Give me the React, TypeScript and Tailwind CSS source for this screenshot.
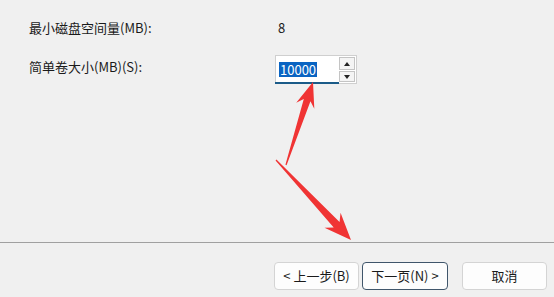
function Arrow({
  tail,
  tip,
  head = 22,
  halfHead = 9,
  shaft = 3,
}: {
  tail: [number, number];
  tip: [number, number];
  head?: number;
  halfHead?: number;
  shaft?: number;
}) {
  const dx = tip[0] - tail[0];
  const dy = tip[1] - tail[1];
  const len = Math.hypot(dx, dy);
  const ux = dx / len;
  const uy = dy / len;
  const px = -uy;
  const py = ux;
  const bx = tip[0] - ux * head;
  const by = tip[1] - uy * head;
  const notchX = tip[0] - ux * (head - 6);
  const notchY = tip[1] - uy * (head - 6);
  const pts = [
    [tail[0] + px * 0.6, tail[1] + py * 0.6],
    [notchX + px * shaft, notchY + py * shaft],
    [bx + px * halfHead, by + py * halfHead],
    [tip[0], tip[1]],
    [bx - px * halfHead, by - py * halfHead],
    [notchX - px * shaft, notchY - py * shaft],
    [tail[0] - px * 0.6, tail[1] - py * 0.6],
  ]
    .map((p) => p.join(","))
    .join(" ");
  return <polygon points={pts} fill="#f03434" />;
}

function Button({
  children,
  primary,
  width,
}: {
  children: React.ReactNode;
  primary?: boolean;
  width: string;
}) {
  return (
    <button
      className={`h-[28px] ${width} rounded-[4px] bg-[#fdfdfd] text-[13px] text-[#1a1a1a] ${
        primary ? "border border-[#40566b]" : "border border-[#d4d4d4]"
      }`}
    >
      {children}
    </button>
  );
}

function SpinInput() {
  return (
    <div className="flex h-[29px] w-[82px] border border-[#cfcfcf] bg-white">
      <div className="relative flex flex-1 items-center pl-[3px]">
        <span className="bg-[#0a64c2] px-[1px] leading-[15px] text-white">
          10000
        </span>
        <div className="absolute bottom-[-1px] left-[-1px] right-0 h-[2px] bg-[#1b5b88]" />
      </div>
      <div className="flex w-[17px] flex-col justify-center gap-[1px] py-[1px] pr-[1px]">
        <div className="flex h-[13px] items-center justify-center border border-[#c4c4c4] bg-[#f4f4f4]">
          <svg width="6" height="4" viewBox="0 0 6 4">
            <path d="M3 0 L6 4 L0 4 Z" fill="#222" />
          </svg>
        </div>
        <div className="flex h-[11px] items-center justify-center border border-[#c4c4c4] bg-[#f4f4f4]">
          <svg width="6" height="4" viewBox="0 0 6 4">
            <path d="M0 0 L6 0 L3 4 Z" fill="#222" />
          </svg>
        </div>
      </div>
    </div>
  );
}

export default function App() {
  return (
    <div
      className="relative flex h-[297px] w-[554px] flex-col overflow-hidden bg-[#f0f0f0] text-[13px] text-[#1a1a1a]"
      style={{ fontFamily: '"Noto Sans CJK SC", "Liberation Sans", sans-serif' }}
    >
      <div className="flex-1 pl-[29px] pt-[17px]">
        <div className="grid grid-cols-[246px_auto] items-start gap-y-[16px]">
          <div className="leading-[22px]">最小磁盘空间量(MB):</div>
          <div className="pl-[3px] leading-[22px]">8</div>
          <div className="pt-[1px] leading-[22px]">简单卷大小(MB)(S):</div>
          <SpinInput />
        </div>
      </div>

      <div className="h-[1px] bg-[#a0a0a0]" />

      <div className="flex h-[54px] items-start justify-end gap-[14px] pr-[7px] pt-[19px]">
        <div className="flex gap-[3px]">
          <Button width="w-[85px]">&lt; 上一步(B)</Button>
          <Button width="w-[86px]" primary>
            下一页(N) &gt;
          </Button>
        </div>
        <Button width="w-[85px]">取消</Button>
      </div>

      <svg
        className="pointer-events-none absolute left-0 top-0"
        width="554"
        height="297"
      >
        <Arrow tail={[286, 165]} tip={[313, 82]} head={25} halfHead={9.5} shaft={3.5} />
        <Arrow tail={[276, 160]} tip={[351, 240]} head={27} halfHead={11} shaft={4} />
      </svg>
    </div>
  );
}
